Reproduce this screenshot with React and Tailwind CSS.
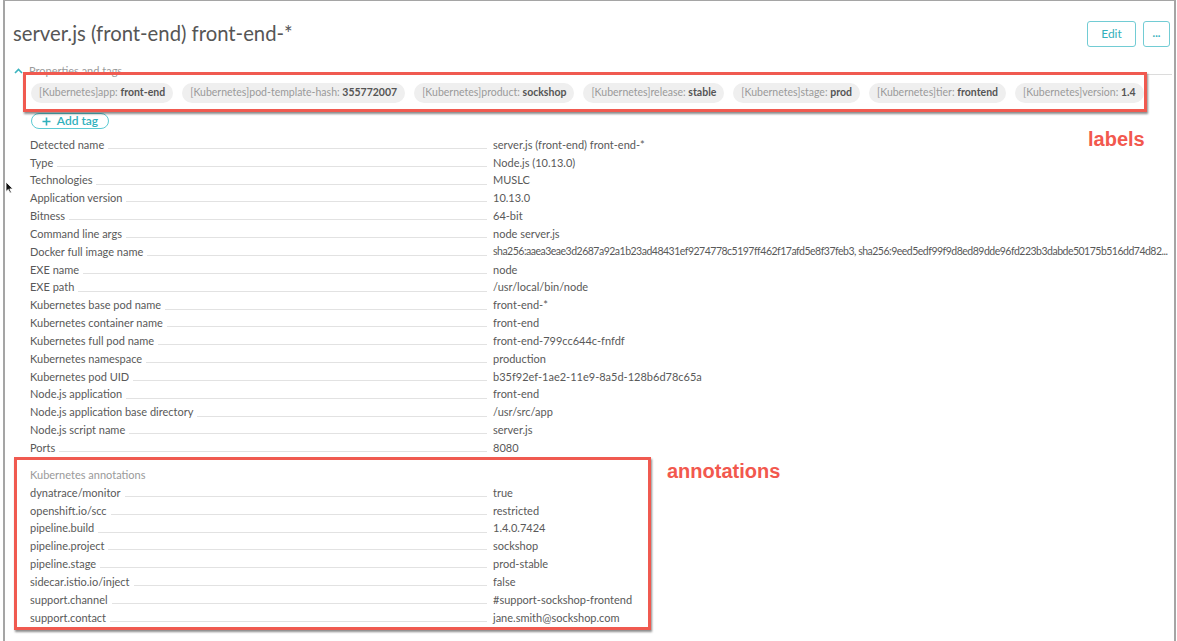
import React from 'react'

const tags = [
  ['app', 'front-end'],
  ['pod-template-hash', '355772007'],
  ['product', 'sockshop'],
  ['release', 'stable'],
  ['stage', 'prod'],
  ['tier', 'frontend'],
  ['version', '1.4'],
]

const props = [
  ['Detected name', 'server.js (front-end) front-end-*'],
  ['Type', 'Node.js (10.13.0)'],
  ['Technologies', 'MUSLC'],
  ['Application version', '10.13.0'],
  ['Bitness', '64-bit'],
  ['Command line args', 'node server.js'],
  ['Docker full image name', 'sha256:aaea3eae3d2687a92a1b23ad48431ef9274778c5197ff462f17afd5e8f37feb3, sha256:9eed5edf99f9d8ed89dde96fd223b3dabde50175b516dd74d82...', true],
  ['EXE name', 'node'],
  ['EXE path', '/usr/local/bin/node'],
  ['Kubernetes base pod name', 'front-end-*'],
  ['Kubernetes container name', 'front-end'],
  ['Kubernetes full pod name', 'front-end-799cc644c-fnfdf'],
  ['Kubernetes namespace', 'production'],
  ['Kubernetes pod UID', 'b35f92ef-1ae2-11e9-8a5d-128b6d78c65a'],
  ['Node.js application', 'front-end'],
  ['Node.js application base directory', '/usr/src/app'],
  ['Node.js script name', 'server.js'],
  ['Ports', '8080'],
]

const annotations = [
  ['dynatrace/monitor', 'true'],
  ['openshift.io/scc', 'restricted'],
  ['pipeline.build', '1.4.0.7424'],
  ['pipeline.project', 'sockshop'],
  ['pipeline.stage', 'prod-stable'],
  ['sidecar.istio.io/inject', 'false'],
  ['support.channel', '#support-sockshop-frontend'],
  ['support.contact', 'jane.smith@sockshop.com'],
]

function Row({ label, value, tight }) {
  return (
    <div className="flex items-center h-[17.85px] pl-[25px] pr-[4px] text-[11px] text-[#595959]">
      <div className="flex items-center w-[457px] shrink-0">
        <span className="whitespace-nowrap">{label}</span>
        <span className="flex-1 ml-[4px] mt-[7px] border-t border-[#e2e2e2]" />
      </div>
      <div className={tight ? 'ml-[6px] flex-1 min-w-0 whitespace-nowrap text-[10.5px] tracking-[-0.5px]' : 'ml-[6px] flex-1 min-w-0 whitespace-nowrap'}>{value}</div>
    </div>
  )
}

export default function App() {
  return (
    <div className="relative w-[1177px] h-[641px] overflow-hidden bg-white font-['Lato',sans-serif]">
      <div className="ml-[3px] w-[1173px] h-[650px] border-l-2 border-r-2 border-t border-[#a5a5a5]">
        <div className="flex items-start justify-between pl-[8px] pr-[4px] pt-[18px]">
          <h1 className="text-[20.3px] leading-[28px] text-[#565656]">server.js (front-end) front-end-*</h1>
          <div className="flex gap-[7px] mt-[2px]">
            <button className="w-[49px] h-[26px] rounded-[3px] border border-[#72ccd4] text-[12px] text-[#34b0bb]">Edit</button>
            <button className="w-[27px] h-[26px] rounded-[3px] border border-[#72ccd4] text-[11px] font-bold text-[#34b0bb] leading-none pb-[3px]">...</button>
          </div>
        </div>

        <div className="flex items-center mt-[17px] h-[14px] pl-[9px] pr-[2px]">
          <svg width="9" height="6" viewBox="0 0 9 6" className="shrink-0">
            <path d="M1 5 L4.5 1.5 L8 5" fill="none" stroke="#3cb4bf" strokeWidth="1.6" />
          </svg>
          <span className="ml-[6px] text-[11px] text-[#9a9a9a] whitespace-nowrap">Properties and tags</span>
          <span className="flex-1 ml-[4px] mt-[6px] border-t border-[#dcdcdc]" />
        </div>

        <div className="flex gap-[9px] mt-[5px] pl-[26px]">
          {tags.map(([k, v]) => (
            <div key={k} className="h-[20px] flex items-center rounded-full bg-[#efefef] px-[8px] text-[10.5px] whitespace-nowrap">
              <span className="text-[#9a9a9a]">[Kubernetes]{k}:&nbsp;</span>
              <span className="font-bold text-[#555]">{v}</span>
            </div>
          ))}
        </div>

        <div className="mt-[10px] pl-[26px]">
          <button className="h-[16px] w-[78px] flex items-center justify-center gap-[6px] rounded-full border border-[#5ccad3] text-[12px] font-semibold text-[#2fb0bc]">
            <svg width="9" height="9" viewBox="0 0 9 9">
              <path d="M4.5 0.5 V8.5 M0.5 4.5 H8.5" stroke="#2fb0bc" strokeWidth="1.6" />
            </svg>
            Add tag
          </button>
        </div>

        <div className="mt-[7px]">
          {props.map(([l, v, t]) => (
            <Row key={l} label={l} value={v} tight={t} />
          ))}
        </div>

        <div className="mt-[9px]">
          <div className="flex items-center h-[17.85px] pl-[25px] text-[11px] text-[#9a9a9a]">Kubernetes annotations</div>
          {annotations.map(([l, v]) => (
            <Row key={l} label={l} value={v} />
          ))}
        </div>
      </div>

      {/* annotation overlays */}
      <div className="absolute left-[23px] top-[72px] w-[1124px] h-[40px] border-[3px] border-[#f05a50] shadow-[1px_2px_2px_rgba(0,0,0,0.45)]" />
      <div className="absolute left-[1088px] top-[124px] text-[20px] font-bold text-[#f2584e] font-['Liberation_Sans',sans-serif]">labels</div>
      <div className="absolute left-[14px] top-[457px] w-[637px] h-[173px] border-[3px] border-[#f05a50] shadow-[1px_2px_2px_rgba(0,0,0,0.45)]" />
      <div className="absolute left-[667px] top-[456px] text-[20px] font-bold text-[#f2584e] font-['Liberation_Sans',sans-serif]">annotations</div>

      <svg className="absolute left-[5px] top-[181px]" width="9" height="13" viewBox="0 0 9 13">
        <path d="M1 1 L1 10.5 L3.3 8.4 L5 12 L6.4 11.4 L4.8 7.9 L8 7.9 Z" fill="#111" stroke="#fff" strokeWidth="0.8" />
      </svg>
    </div>
  )
}
